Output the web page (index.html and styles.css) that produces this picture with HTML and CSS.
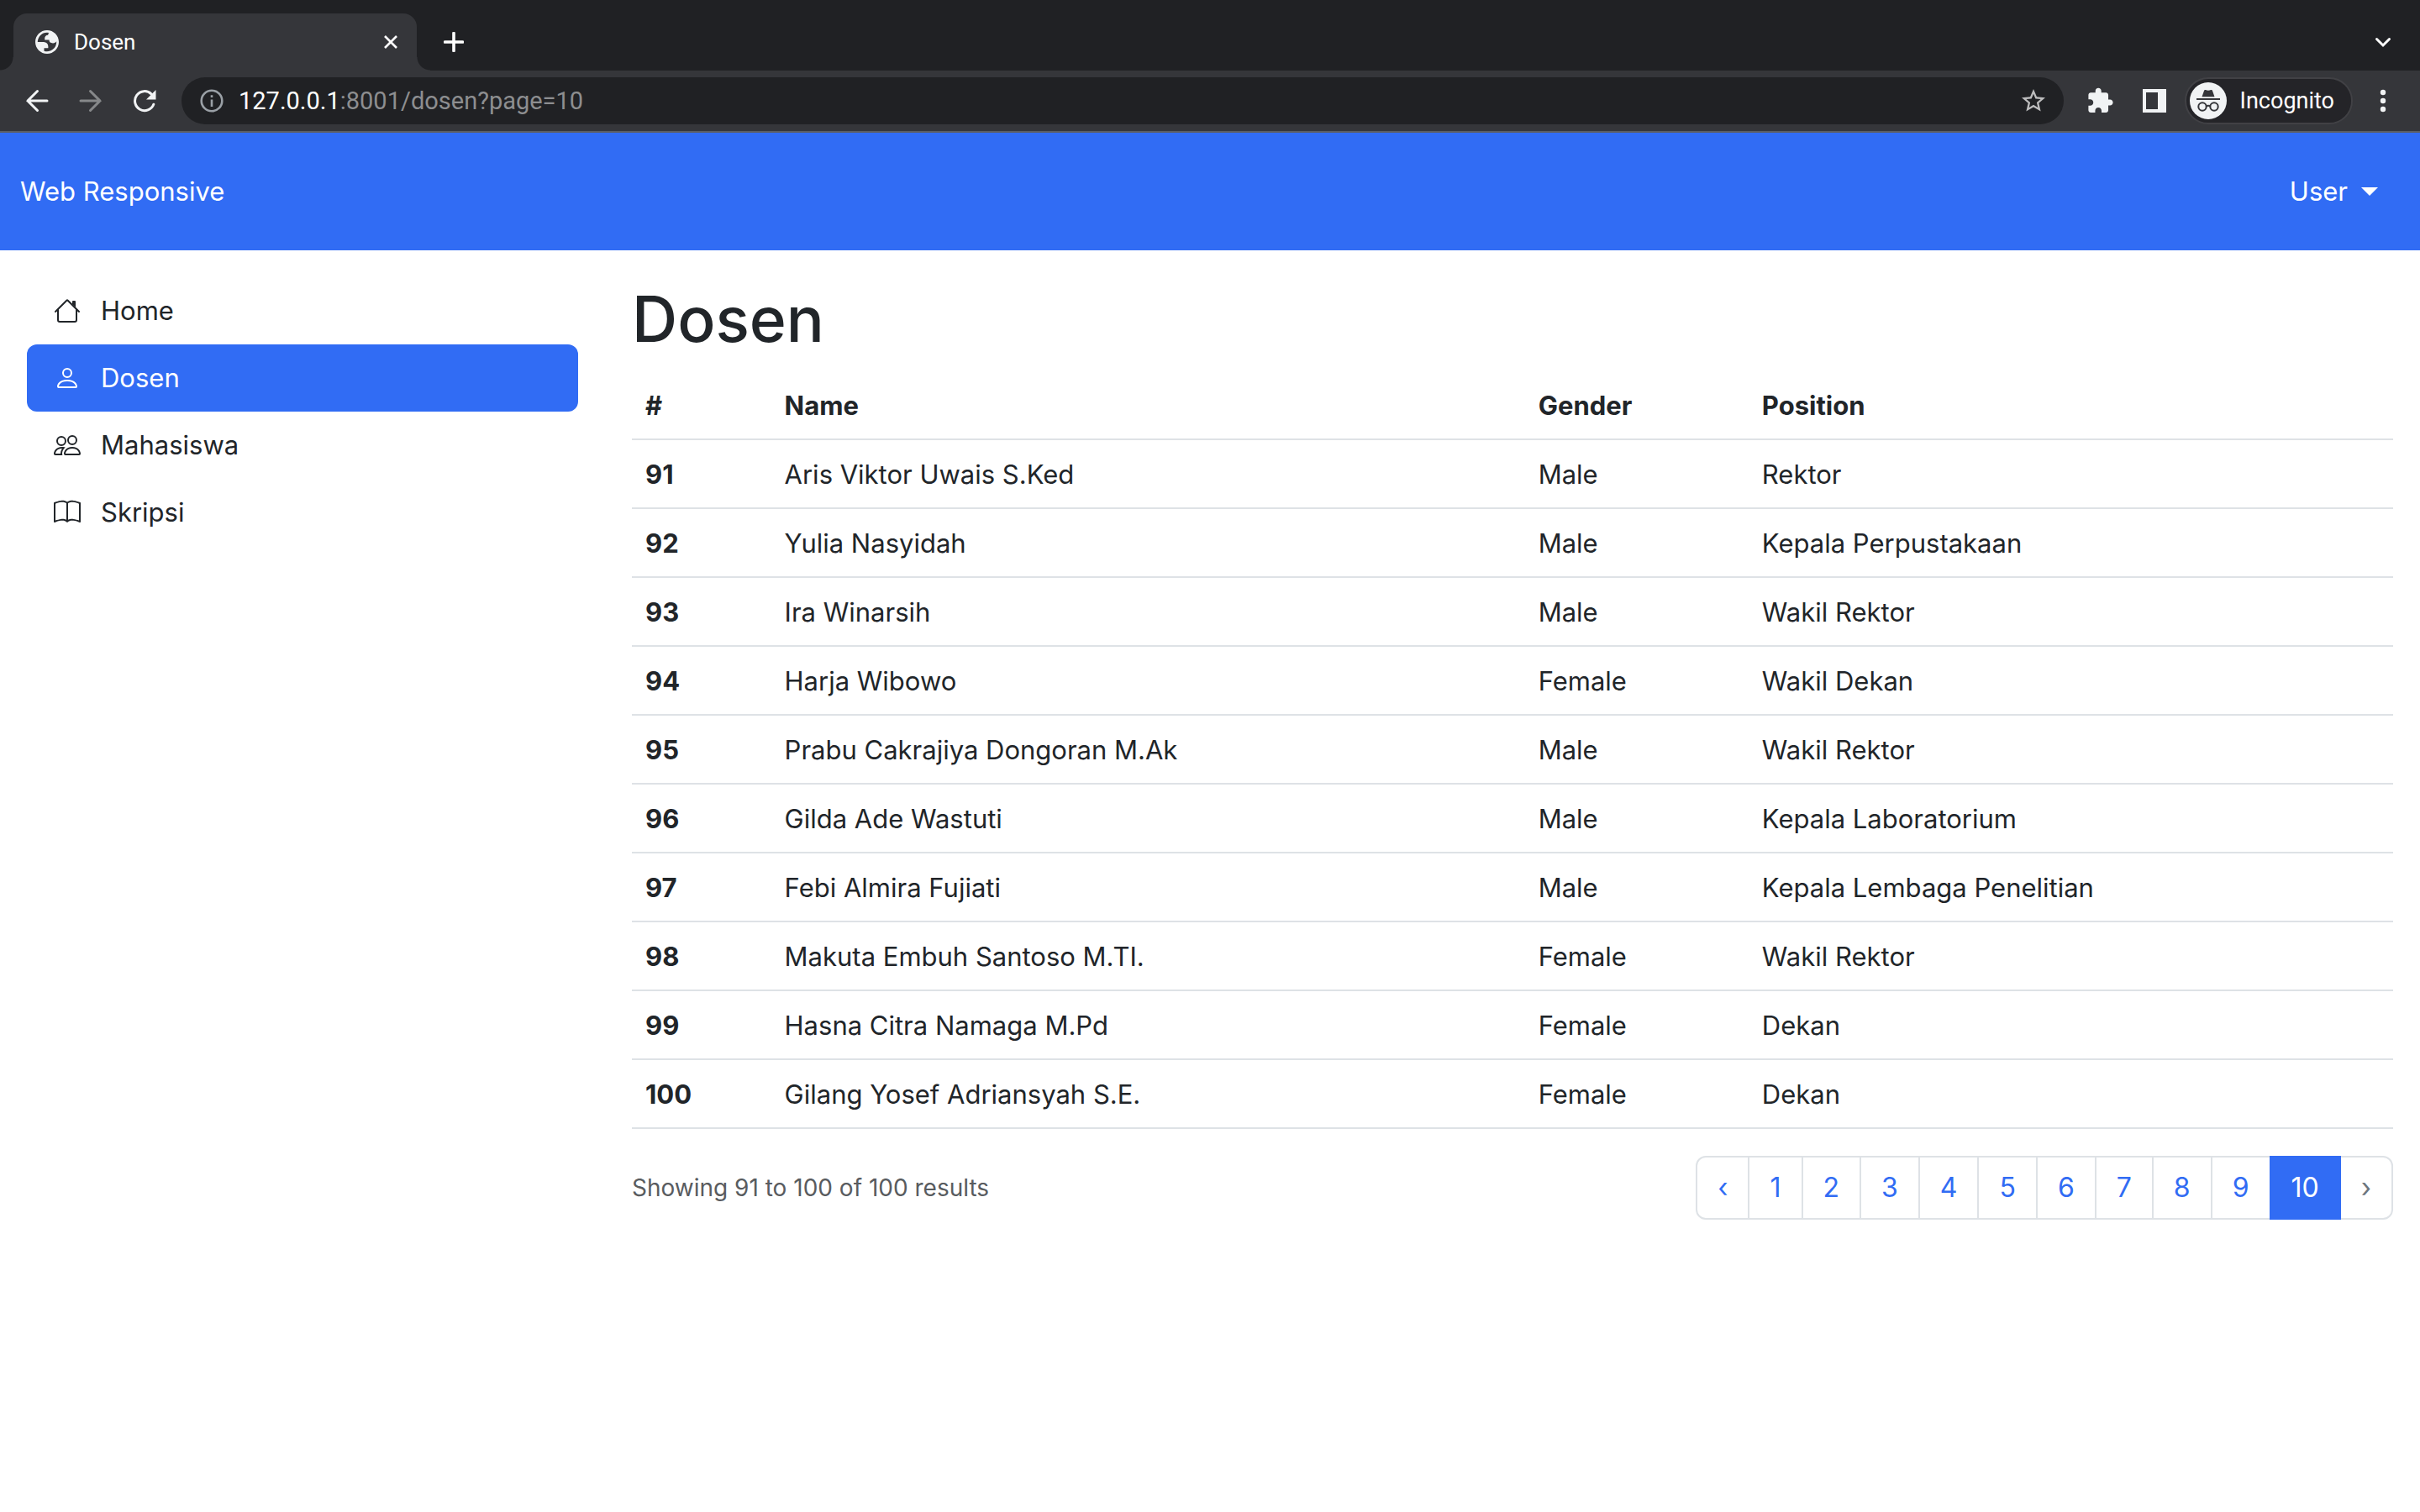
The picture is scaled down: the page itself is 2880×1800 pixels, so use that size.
FILE: index.html
```html
<!DOCTYPE html>
<html lang="id">
<head>
<meta charset="utf-8">
<meta name="viewport" content="width=device-width, initial-scale=1">
<title>Dosen</title>
<link rel="stylesheet" href="styles.css">
</head>
<body>
<div class="browser">
  <div class="tab-strip">
    <span class="flare flare-left"></span>
    <div class="tab">
      <svg class="icon-28" viewBox="2 2 20 20" aria-hidden="true"><path fill="#f1f3f4" fill-rule="evenodd" d="M12 2C6.480 2 2 6.480 2 12s4.480 10 10 10 10-4.480 10-10S17.520 2 12 2zM4 12h4.400c3.407.022 4.922 1.730 4.543 5.127H9.488v2.470a8.004 8.004 0 0 0 10.498-8.083C19.327 12.504 18.332 13 17 13c-2.137 0-3.210-.916-3.210-2.750h-3.748c-.274-2.728.683-4.092 2.870-4.092 0-.975.327-1.597.811-1.970A8.004 8.004 0 0 0 4 12z"/></svg>
      <span class="tab-title">Dosen</span>
      <button class="icon-button" aria-label="Close tab"><svg class="icon-18" viewBox="0 0 18 18"><path d="M2 2l14 14M16 2L2 16" stroke="#fff" stroke-width="2.600" fill="none"/></svg></button>
    </div>
    <span class="flare flare-right"></span>
    <button class="icon-button new-tab" aria-label="New tab"><svg class="icon-24" viewBox="0 0 24 24"><path d="M12 1.500v21M1.500 12h21" stroke="#fff" stroke-width="3.600" stroke-linecap="round"/></svg></button>
    <button class="icon-button tab-search" aria-label="Search tabs"><svg class="icon-24" viewBox="0 0 24 24"><path d="M4.500 8.500L12 16l7.500-7.500" stroke="#fff" stroke-width="3" fill="none" stroke-linecap="round"/></svg></button>
  </div>
  <div class="toolbar">
    <div class="nav-buttons">
      <button class="icon-button" aria-label="Back"><svg class="icon-28" viewBox="0 0 28 28"><path d="M26 14H3M14.500 2.500L3 14l11.500 11.500" stroke="#f1f3f4" stroke-width="3" fill="none" stroke-linecap="round"/></svg></button>
      <button class="icon-button" aria-label="Forward"><svg class="icon-28" viewBox="0 0 28 28"><path d="M2 14h23M13.500 2.500L25 14 13.500 25.500" stroke="#86888a" stroke-width="3" fill="none" stroke-linecap="round"/></svg></button>
      <button class="icon-button" aria-label="Reload"><svg class="icon-28" viewBox="0 0 28 28"><path d="M24.800 18.200A11.500 11.500 0 1 1 22 5.800" stroke="#f1f3f4" stroke-width="3" fill="none" stroke-linecap="round"/><path d="M27.500 1v11.500H16z" fill="#f1f3f4"/></svg></button>
    </div>
    <div class="address-bar">
      <svg class="icon-28" viewBox="0 0 28 28" aria-hidden="true"><circle cx="14" cy="14" r="12.300" fill="none" stroke="#9aa0a6" stroke-width="2.600"/><path d="M12.700 12.500h2.600V21h-2.600zM12.700 7.300h2.600V10h-2.600z" fill="#9aa0a6"/></svg>
      <div class="url" role="textbox" contenteditable="true" spellcheck="false" aria-label="Address"><span class="url-host">127.0.0.1</span>:8001/dosen?page=10</div>
      <button class="icon-button" aria-label="Bookmark this tab"><svg class="icon-28" viewBox="2 2 20 20"><path d="M22 9.240l-7.190-.62L12 2 9.190 8.630 2 9.240l5.460 4.730L5.820 21 12 17.270 18.180 21l-1.630-7.030L22 9.240zM12 15.400l-3.760 2.270 1-4.280-3.320-2.880 4.380-.38L12 6.100l1.710 4.040 4.380.38-3.320 2.880 1 4.280L12 15.400z" fill="#bdbdbe"/></svg></button>
    </div>
    <div class="toolbar-actions">
      <button class="icon-button" aria-label="Extensions"><svg class="icon-32" viewBox="1 0.500 23 23"><path d="M20.500 11H19V7c0-1.100-.9-2-2-2h-4V3.500C13 2.120 11.880 1 10.500 1S8 2.120 8 3.500V5H4c-1.100 0-1.990.9-1.990 2v3.800H3.500c1.490 0 2.700 1.210 2.700 2.700s-1.210 2.700-2.700 2.700H2V20c0 1.100.9 2 2 2h3.800v-1.500c0-1.490 1.210-2.700 2.700-2.700 1.490 0 2.700 1.210 2.700 2.700V22H17c1.100 0 2-.9 2-2v-4h1.500c1.380 0 2.500-1.120 2.500-2.500S21.880 11 20.500 11z" fill="#f1f3f4"/></svg></button>
      <button class="icon-button" aria-label="Side panel"><svg class="icon-28" viewBox="0 0 28 28"><path d="M0 0h28v28H0zM4 4v20h14V4z" fill="#f1f3f4" fill-rule="evenodd"/></svg></button>
      <button class="incognito">
        <svg class="icon-44" viewBox="0 0 44 44" aria-hidden="true"><circle cx="22" cy="22" r="22" fill="#f1f3f4"/><path d="M14.500 17.300l2.600-7.500c.3-.9 1-1 1.800-.7 2 .9 4.200.9 6.200 0 .8-.3 1.500-.2 1.800.7l2.600 7.500zM8 19h28v2H8z" fill="#35363a"/><g fill="none" stroke="#35363a" stroke-width="2"><circle cx="15" cy="29" r="4.700"/><circle cx="29" cy="29" r="4.700"/><path d="M19.700 28.400q2.300-1.200 4.600 0"/></g></svg>
        <span>Incognito</span>
      </button>
      <button class="icon-button" aria-label="Menu"><svg class="icon-28" viewBox="0 0 28 28"><g fill="#f1f3f4"><circle cx="14" cy="4" r="3.200"/><circle cx="14" cy="14" r="3.200"/><circle cx="14" cy="24" r="3.200"/></g></svg></button>
    </div>
  </div>
</div>

<header class="navbar">
  <a class="navbar-brand" href="#">Web Responsive</a>
  <button class="user-menu" aria-haspopup="true">User <span class="caret"></span></button>
</header>

<div class="layout">
  <nav class="sidebar" aria-label="Menu">
    <a class="nav-link" href="#"><svg class="icon-32" viewBox="0 0 16 16" fill="currentColor" aria-hidden="true"><path fill-rule="evenodd" d="M2 13.500V7h1v6.500a.5.5 0 0 0 .5.5h9a.5.5 0 0 0 .5-.5V7h1v6.500a1.500 1.500 0 0 1-1.500 1.500h-9A1.500 1.500 0 0 1 2 13.500zm11-11V6l-2-2V2.500a.5.5 0 0 1 .5-.5h1a.5.5 0 0 1 .5.5z"/><path fill-rule="evenodd" d="M7.293 1.500a1 1 0 0 1 1.414 0l6.647 6.646a.5.5 0 0 1-.708.708L8 2.207 1.354 8.854a.5.5 0 1 1-.708-.708L7.293 1.500z"/></svg>Home</a>
    <a class="nav-link active" href="#" aria-current="page"><svg class="icon-32" viewBox="0 0 16 16" fill="currentColor" aria-hidden="true"><path d="M8 8a3 3 0 1 0 0-6 3 3 0 0 0 0 6zm2-3a2 2 0 1 1-4 0 2 2 0 0 1 4 0zm4 8c0 1-1 1-1 1H3s-1 0-1-1 1-4 6-4 6 3 6 4zm-1-.004c-.001-.246-.154-.986-.832-1.664C11.516 10.680 10.289 10 8 10c-2.290 0-3.516.68-4.168 1.332-.678.678-.83 1.418-.832 1.664h10z"/></svg>Dosen</a>
    <a class="nav-link" href="#"><svg class="icon-32" viewBox="0 0 16 16" fill="currentColor" aria-hidden="true"><path d="M15 14s1 0 1-1-1-4-5-4-5 3-5 4 1 1 1 1h8zm-7.978-1A.261.261 0 0 1 7 12.996c.001-.264.167-1.030.76-1.720C8.312 10.629 9.282 10 11 10c1.717 0 2.687.630 3.240 1.276.593.690.758 1.457.760 1.720l-.008.002a.274.274 0 0 1-.014.002H7.022zM11 7a2 2 0 1 0 0-4 2 2 0 0 0 0 4zm3-2a3 3 0 1 1-6 0 3 3 0 0 1 6 0zM6.936 9.280a5.880 5.880 0 0 0-1.230-.247A7.350 7.350 0 0 0 5 9c-4 0-5 3-5 4 0 .667.333 1 1 1h4.216A2.238 2.238 0 0 1 5 13c0-1.010.377-2.042 1.090-2.904.243-.294.526-.569.846-.816zM4.920 10A5.493 5.493 0 0 0 4 13H1c0-.26.164-1.030.76-1.724.545-.636 1.492-1.256 3.160-1.275zM1.500 5.500a3 3 0 1 1 6 0 3 3 0 0 1-6 0zm3-2a2 2 0 1 0 0 4 2 2 0 0 0 0-4z"/></svg>Mahasiswa</a>
    <a class="nav-link" href="#"><svg class="icon-32" viewBox="0 0 16 16" fill="currentColor" aria-hidden="true"><path d="M1 2.828c.885-.37 2.154-.769 3.388-.893 1.330-.134 2.458.063 3.112.752v9.746c-.935-.53-2.120-.603-3.213-.493-1.180.12-2.370.461-3.287.811V2.828zm7.500-.141c.654-.689 1.782-.886 3.112-.752 1.234.124 2.503.523 3.388.893v9.923c-.918-.35-2.107-.692-3.287-.81-1.094-.111-2.278-.039-3.213.492V2.687zM8 1.783C7.015.936 5.587.81 4.287.94c-1.514.153-3.042.672-3.994 1.105A.5.5 0 0 0 0 2.500v11a.5.5 0 0 0 .707.455c.882-.4 2.303-.881 3.680-1.020 1.409-.142 2.590.087 3.223.877a.5.5 0 0 0 .78 0c.633-.79 1.814-1.019 3.222-.877 1.378.139 2.800.62 3.681 1.020A.5.5 0 0 0 16 13.500v-11a.5.5 0 0 0-.293-.455c-.952-.433-2.480-.952-3.994-1.105C10.413.809 8.985.936 8 1.783z"/></svg>Skripsi</a>
  </nav>

  <main class="content">
    <h1>Dosen</h1>
    <table class="table">
      <colgroup><col class="col-number"><col class="col-name"><col class="col-gender"><col></colgroup>
      <thead>
        <tr><th scope="col">#</th><th scope="col">Name</th><th scope="col">Gender</th><th scope="col">Position</th></tr>
      </thead>
      <tbody>
        <tr><th scope="row">91</th><td>Aris Viktor Uwais S.Ked</td><td>Male</td><td>Rektor</td></tr>
        <tr><th scope="row">92</th><td>Yulia Nasyidah</td><td>Male</td><td>Kepala Perpustakaan</td></tr>
        <tr><th scope="row">93</th><td>Ira Winarsih</td><td>Male</td><td>Wakil Rektor</td></tr>
        <tr><th scope="row">94</th><td>Harja Wibowo</td><td>Female</td><td>Wakil Dekan</td></tr>
        <tr><th scope="row">95</th><td>Prabu Cakrajiya Dongoran M.Ak</td><td>Male</td><td>Wakil Rektor</td></tr>
        <tr><th scope="row">96</th><td>Gilda Ade Wastuti</td><td>Male</td><td>Kepala Laboratorium</td></tr>
        <tr><th scope="row">97</th><td>Febi Almira Fujiati</td><td>Male</td><td>Kepala Lembaga Penelitian</td></tr>
        <tr><th scope="row">98</th><td>Makuta Embuh Santoso M.TI.</td><td>Female</td><td>Wakil Rektor</td></tr>
        <tr><th scope="row">99</th><td>Hasna Citra Namaga M.Pd</td><td>Female</td><td>Dekan</td></tr>
        <tr><th scope="row">100</th><td>Gilang Yosef Adriansyah S.E.</td><td>Female</td><td>Dekan</td></tr>
      </tbody>
    </table>
    <div class="table-footer">
      <p class="summary">Showing 91 to 100 of 100 results</p>
      <nav aria-label="Pagination">
        <ul class="pagination">
          <li><a class="page-link" href="#" aria-label="Previous">‹</a></li>
          <li><a class="page-link" href="#">1</a></li>
          <li><a class="page-link" href="#">2</a></li>
          <li><a class="page-link" href="#">3</a></li>
          <li><a class="page-link" href="#">4</a></li>
          <li><a class="page-link" href="#">5</a></li>
          <li><a class="page-link" href="#">6</a></li>
          <li><a class="page-link" href="#">7</a></li>
          <li><a class="page-link" href="#">8</a></li>
          <li><a class="page-link" href="#">9</a></li>
          <li><span class="page-link current" aria-current="page">10</span></li>
          <li><span class="page-link disabled" aria-disabled="true">›</span></li>
        </ul>
      </nav>
    </div>
  </main>
</div>
</body>
</html>
```
FILE: styles.css
```css
:root {
  --blue: #316cf4;
  --ink: #212529;
  --line: #dee2e6;
  --chrome-dark: #202124;
  --chrome: #35363a;
}

* { box-sizing: border-box; }

body {
  margin: 0;
  background: #fff;
  color: var(--ink);
  font: 400 31px/48px Inter, "Liberation Sans", sans-serif;
}

a { color: inherit; text-decoration: none; }

button {
  margin: 0;
  padding: 0;
  border: 0;
  background: none;
  color: inherit;
  font: inherit;
  cursor: pointer;
}

svg { display: block; flex: none; }

.icon-18 { width: 18px; height: 18px; }
.icon-24 { width: 24px; height: 24px; }
.icon-28 { width: 28px; height: 28px; }
.icon-32 { width: 32px; height: 32px; }
.icon-44 { width: 44px; height: 44px; }

/* Browser window */
.browser {
  border-bottom: 2px solid #5c5e62;
  background: var(--chrome);
  color: #fff;
  font-family: Roboto, "Liberation Sans", sans-serif;
}

.tab-strip {
  display: flex;
  align-items: center;
  height: 84px;
  padding-top: 16px;
  background: var(--chrome-dark);
}

.tab {
  display: flex;
  align-items: center;
  width: 480px;
  height: 68px;
  padding: 0 22px 0 26px;
  border-radius: 16px 16px 0 0;
  background: var(--chrome);
}

.tab-title {
  flex: 1;
  margin-left: 18px;
  font-size: 26px;
  line-height: 32px;
}

.flare { align-self: flex-end; width: 16px; height: 16px; }
.flare-left { background: radial-gradient(circle at 0 0, transparent 15px, var(--chrome) 16px); }
.flare-right { background: radial-gradient(circle at 100% 0, transparent 15px, var(--chrome) 16px); }

.new-tab { margin-left: 16px; }
.tab-search { margin: 0 32px 0 auto; }

.toolbar {
  display: flex;
  align-items: center;
  padding: 8px 30px;
}

.nav-buttons { display: flex; gap: 36px; margin-right: 30px; }

.address-bar {
  display: flex;
  flex: 1;
  align-items: center;
  height: 56px;
  padding: 0 22px;
  border-radius: 28px;
  background: var(--chrome-dark);
}

.url {
  flex: 1;
  margin-left: 18px;
  color: #8d8e90;
  font-size: 29px;
  line-height: 40px;
}

.url-host { color: #fff; }

.toolbar-actions { display: flex; align-items: center; margin-left: 28px; }
.toolbar-actions .icon-button:nth-child(2) { margin: 0 22px 0 34px; }
.toolbar-actions .icon-button:last-child { margin-left: 22px; }

.incognito {
  display: flex;
  align-items: center;
  gap: 16px;
  height: 56px;
  padding: 0 20px 0 4px;
  border: 2px solid #414145;
  border-radius: 28px;
  background: #242428;
  font-size: 27px;
}

/* Page header */
.navbar {
  display: flex;
  align-items: center;
  justify-content: space-between;
  padding: 46px 50px 46px 24px;
  background: var(--blue);
  color: #fff;
}

.user-menu { display: flex; align-items: center; gap: 16px; }

.caret {
  border: 10px solid transparent;
  border-top-color: #fff;
  border-bottom: 0;
}

/* Sidebar and content */
.layout {
  display: grid;
  grid-template-columns: 1fr 3fr;
}

.sidebar { padding: 32px; }

.nav-link {
  display: flex;
  align-items: center;
  gap: 24px;
  padding: 16px 32px;
  border-radius: 12px;
}

.nav-link.active { background: var(--blue); color: #fff; }

.content { padding: 32px; }

h1 {
  margin: 0 0 12px;
  font-size: 75px;
  font-weight: 500;
  line-height: 100px;
}

.table {
  width: 100%;
  border-collapse: separate;
  border-spacing: 0;
  table-layout: fixed;
}

.col-number { width: 7.9%; }
.col-name { width: 42.8%; }
.col-gender { width: 12.7%; }

.table th,
.table td {
  padding: 17px 16px 15px;
  border-bottom: 2px solid var(--line);
  text-align: left;
}

.table th { font-weight: 700; }

.table-footer {
  display: flex;
  align-items: center;
  justify-content: space-between;
  margin-top: 32px;
}

.summary {
  margin: 0;
  color: #595c5f;
  font-size: 28px;
  line-height: 40px;
}

.pagination {
  display: flex;
  margin: 0;
  padding: 0;
  list-style: none;
  font-size: 32px;
}

.pagination li + li { margin-left: -2px; }

.page-link {
  display: block;
  padding: 12px 24px;
  border: 2px solid var(--line);
  color: var(--blue);
}

.pagination li:first-child .page-link { border-radius: 12px 0 0 12px; }
.pagination li:last-child .page-link { border-radius: 0 12px 12px 0; }

.page-link.current {
  position: relative;
  border-color: var(--blue);
  background: var(--blue);
  color: #fff;
}

.page-link.disabled { color: #6c757d; }
```
